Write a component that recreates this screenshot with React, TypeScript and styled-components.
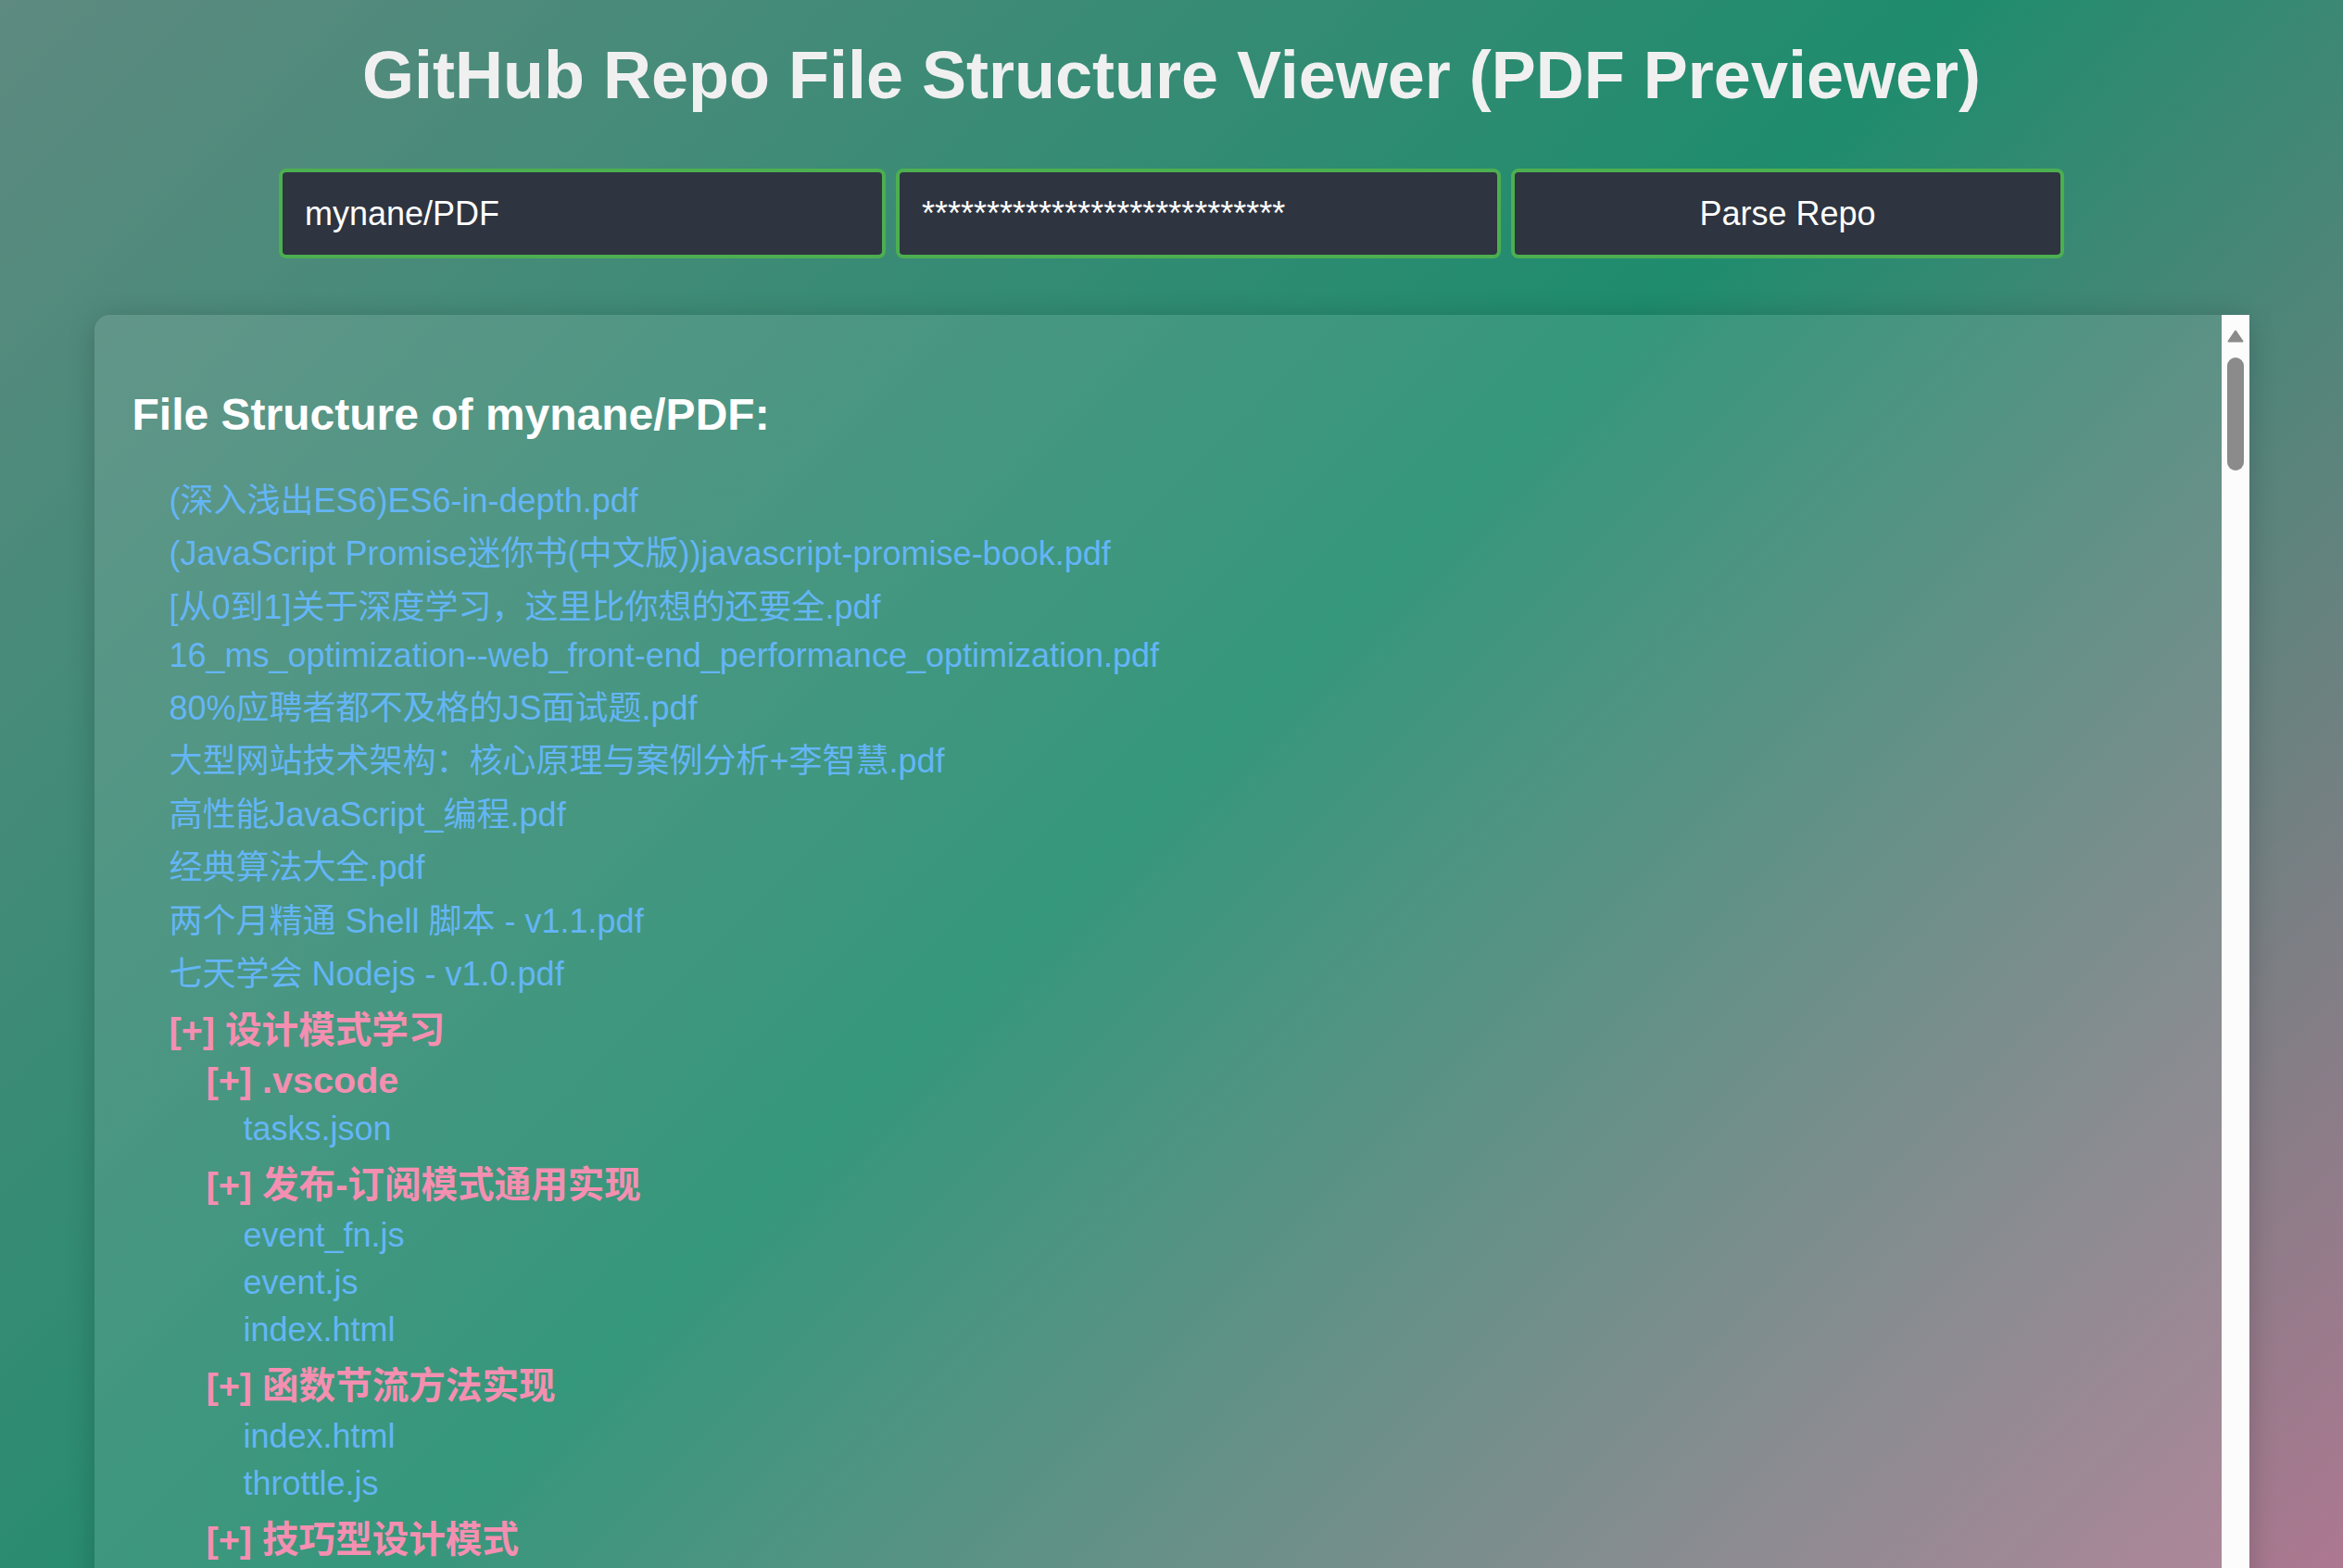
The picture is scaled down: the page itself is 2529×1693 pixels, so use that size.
import styled, { createGlobalStyle } from "styled-components";

type Entry = { name: string; children?: Entry[] };

const REPO = "mynane/PDF";
const TOKEN_MASK = "*".repeat(28);

const tree: Entry[] = [
  { name: "(深入浅出ES6)ES6-in-depth.pdf" },
  { name: "(JavaScript Promise迷你书(中文版))javascript-promise-book.pdf" },
  { name: "[从0到1]关于深度学习，这里比你想的还要全.pdf" },
  { name: "16_ms_optimization--web_front-end_performance_optimization.pdf" },
  { name: "80%应聘者都不及格的JS面试题.pdf" },
  { name: "大型网站技术架构：核心原理与案例分析+李智慧.pdf" },
  { name: "高性能JavaScript_编程.pdf" },
  { name: "经典算法大全.pdf" },
  { name: "两个月精通 Shell 脚本 - v1.1.pdf" },
  { name: "七天学会 Nodejs - v1.0.pdf" },
  {
    name: "设计模式学习",
    children: [
      { name: ".vscode", children: [{ name: "tasks.json" }] },
      {
        name: "发布-订阅模式通用实现",
        children: [{ name: "event_fn.js" }, { name: "event.js" }, { name: "index.html" }],
      },
      {
        name: "函数节流方法实现",
        children: [{ name: "index.html" }, { name: "throttle.js" }],
      },
      { name: "技巧型设计模式", children: [] },
    ],
  },
];

// CJK glyphs come from a taller fallback font, so those rows get their own metrics
const hasCJK = (s: string) => /[\u3000-\u9fff\uff00-\uffef]/.test(s);

const GlobalStyle = createGlobalStyle`
  html, body {
    margin: 0;
    height: 100%;
    overflow: hidden;
  }
  body {
    font-family: "Liberation Sans", Arial, "Noto Sans CJK SC", sans-serif;
    background: linear-gradient(135deg, #5e8a80 0%, #1f8c6d 50%, #ad7891 100%) fixed;
  }
`;

const Tree = ({ items }: { items: Entry[] }) => (
  <List>
    {items.map((item, i) =>
      item.children ? (
        <FolderItem key={i}>
          <FolderLabel $cjk={hasCJK(item.name)}>[+] {item.name}</FolderLabel>
          {item.children.length > 0 && <Tree items={item.children} />}
        </FolderItem>
      ) : (
        <FileItem key={i} $cjk={hasCJK(item.name)}>
          {item.name}
        </FileItem>
      )
    )}
  </List>
);

const App = () => {
  return (
    <Page>
      <GlobalStyle />
      <Title>GitHub Repo File Structure Viewer (PDF Previewer)</Title>
      <Controls onSubmit={(e) => e.preventDefault()}>
        <Field defaultValue={REPO} placeholder="owner/repo" />
        <Field defaultValue={TOKEN_MASK} placeholder="token" />
        <ParseButton type="submit">Parse Repo</ParseButton>
      </Controls>
      <Panel>
        <Content>
          <Heading>File Structure of {REPO}:</Heading>
          <Tree items={tree} />
        </Content>
        <Track>
          <svg width="18" height="14" viewBox="0 0 18 14">
            <path d="M9 1.5 L16.5 12.5 L1.5 12.5 Z" fill="#8b8b8b" stroke="#8b8b8b" strokeWidth="2" strokeLinejoin="round" />
          </svg>
          <Thumb />
        </Track>
      </Panel>
    </Page>
  );
};
export default App;

const Page = styled.div`
  display: flex;
  flex-direction: column;
  align-items: center;
`;

const Title = styled.h1`
  margin: 40px 0 0;
  font-size: 72px;
  line-height: 83px;
  font-weight: 700;
  color: #f0f0f0;
`;

const Controls = styled.form`
  display: grid;
  grid-template-columns: 655px 653px 597px;
  gap: 11px;
  margin-top: 59px;
`;

const Field = styled.input`
  box-sizing: border-box;
  height: 97px;
  padding: 0 24px;
  border: 4px solid #4caf50;
  border-radius: 8px;
  background: #2e3440;
  color: #ffffff;
  font-family: "Liberation Sans", Arial, sans-serif;
  font-size: 36px;
  outline: none;
`;

const ParseButton = styled.button`
  box-sizing: border-box;
  height: 97px;
  border: 4px solid #4caf50;
  border-radius: 8px;
  background: #2e3440;
  color: #ffffff;
  font-family: "Liberation Sans", Arial, sans-serif;
  font-size: 36px;
  cursor: pointer;
`;

const Panel = styled.section`
  display: flex;
  width: 2326px;
  height: 1500px;
  margin-top: 61px;
  border-radius: 16px;
  background: rgba(255, 255, 255, 0.1);
  box-shadow: 0 4px 30px rgba(0, 0, 0, 0.2);
`;

const Content = styled.div`
  flex: 1;
  min-width: 0;
  padding: 40px 0 0 41px;
`;

const Heading = styled.h2`
  margin: 40px 0 34px;
  font-size: 48px;
  line-height: 55px;
  font-weight: 700;
  color: #ffffff;
`;

const List = styled.ul`
  list-style: none;
  margin: 0;
  padding: 0 0 0 40px;
`;

const FileItem = styled.li<{ $cjk: boolean }>`
  box-sizing: border-box;
  height: ${(p) => (p.$cjk ? 57.5 : 51.4)}px;
  padding-top: ${(p) => (p.$cjk ? 9.8 : 5)}px;
  line-height: ${(p) => (p.$cjk ? 44.8 : 41.4)}px;
  font-size: 36px;
  color: #64b5f6;
  white-space: nowrap;
`;

const FolderItem = styled.li``;

const FolderLabel = styled.div<{ $cjk: boolean }>`
  box-sizing: border-box;
  height: ${(p) => (p.$cjk ? 63.1 : 52.2)}px;
  padding-top: ${(p) => (p.$cjk ? 10.6 : 3.3)}px;
  line-height: ${(p) => (p.$cjk ? 49.3 : 45.6)}px;
  font-size: 39.6px;
  font-weight: 700;
  color: #f48fb1;
  white-space: nowrap;
`;

const Track = styled.div`
  flex: none;
  display: flex;
  flex-direction: column;
  align-items: center;
  width: 30px;
  padding-top: 16px;
  box-sizing: border-box;
  background: #fcfcfc;
`;

const Thumb = styled.div`
  width: 18px;
  height: 122px;
  margin-top: 16px;
  border-radius: 9px;
  background: #8b8b8b;
`;
